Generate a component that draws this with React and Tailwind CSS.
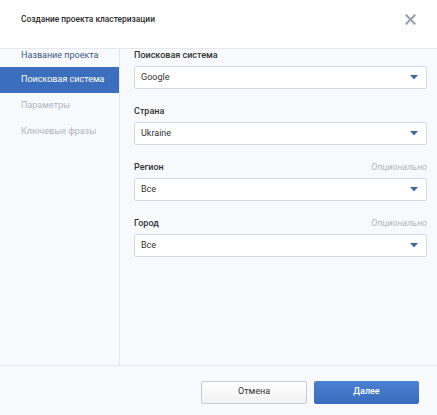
import React from 'react';

const fields = [
  { label: 'Поисковая система', value: 'Google', optional: false },
  { label: 'Страна', value: 'Ukraine', optional: false },
  { label: 'Регион', value: 'Все', optional: true },
  { label: 'Город', value: 'Все', optional: true },
];

const steps = [
  { name: 'Название проекта', state: 'done' },
  { name: 'Поисковая система', state: 'active' },
  { name: 'Параметры', state: 'todo' },
  { name: 'Ключевые фразы', state: 'todo' },
];

const SelectBox = ({ value }) => (
  <div className="h-[23px] flex items-center justify-between bg-white border border-[#d5d9e0] rounded-[2px] pl-[6px] pr-[8px]">
    <span className="text-[9px] text-[#333]">{value}</span>
    <svg width="8" height="5" viewBox="0 0 8 5">
      <path d="M0 0 L8 0 L4 4.5 Z" fill="#45679a" />
    </svg>
  </div>
);

export default function App() {
  return (
    <div className="w-[437px] h-[415px] flex flex-col bg-[#f8f9fc] font-['Roboto',sans-serif] overflow-hidden">
      {/* Header */}
      <div className="h-[49px] shrink-0 flex items-center justify-between bg-white border-b border-[#e6e8ee] pl-[21px] pr-[21px] pb-[9px]">
        <span className="text-[8.4px] font-medium text-[#2b2b2b]">Создание проекта кластеризации</span>
        <svg width="11" height="11" viewBox="0 0 11 11">
          <path d="M1.5 1.5 L9.5 9.5 M9.5 1.5 L1.5 9.5" stroke="#9ba1b3" strokeWidth="2.2" strokeLinecap="square" />
        </svg>
      </div>

      {/* Body */}
      <div className="flex flex-1 min-h-0">
        <div className="w-[120px] shrink-0 border-r border-[#e3e6ec]">
          <div className="-mt-[7px]">
            {steps.map((s, i) => (
              <div
                key={s.name}
                className={
                  'flex items-center pl-[21px] text-[9px] whitespace-nowrap ' +
                  (i === 0 ? 'h-[25px] pt-[2px] ' : 'h-[26px] ') +
                  (s.state === 'active'
                    ? 'bg-[#3b6ebd] text-white'
                    : s.state === 'done'
                    ? 'text-[#3b5a82]'
                    : 'text-[#b0b5bf]')
                }
              >
                {s.name}
              </div>
            ))}
          </div>
        </div>

        <div className="flex-1 pl-[14px] pr-[10px] flex flex-col gap-[16px]">
          {fields.map((f) => (
            <div key={f.label}>
              <div className="h-[13px] mb-[4px] flex items-center justify-between">
                <span className="text-[9px] font-medium text-[#333]">{f.label}</span>
                {f.optional && (
                  <span className="text-[9px] italic text-[#b3b7bf]">Опционально</span>
                )}
              </div>
              <SelectBox value={f.value} />
            </div>
          ))}
        </div>
      </div>

      {/* Footer */}
      <div className="h-[50px] shrink-0 border-t border-[#e3e6ec] flex items-center justify-end gap-[7px] pr-[18px] pt-[3px]">
        <button className="w-[106px] h-[23px] rounded-[2px] border border-[#c9cbd1] bg-gradient-to-b from-white to-[#f1f1f3] text-[9px] text-[#333]">
          Отмена
        </button>
        <button className="w-[105px] h-[23px] rounded-[2px] bg-gradient-to-b from-[#4a80d2] to-[#3a6cbd] text-[9px] font-medium text-white">
          Далее
        </button>
      </div>
    </div>
  );
}
